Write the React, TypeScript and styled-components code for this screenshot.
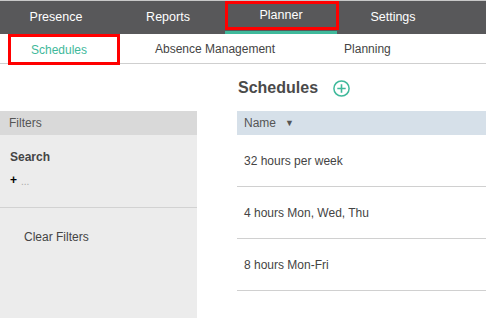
import styled, { createGlobalStyle } from 'styled-components';

const GlobalStyle = createGlobalStyle`
  html, body {
    margin: 0;
    padding: 0;
    background: #fff;
    font-family: "Liberation Sans", Arial, sans-serif;
    font-size: 12px;
    color: #444;
  }
`;

const mainTabs = ['Presence', 'Reports', 'Planner', 'Settings'];
const rows = ['32 hours per week', '4 hours Mon, Wed, Thu', '8 hours Mon-Fri'];

const PlusCircle = () => (
  <svg width="17" height="17" viewBox="0 0 17 17" fill="none">
    <circle cx="8.5" cy="8.5" r="7.6" stroke="#3fb99b" strokeWidth="1.5" />
    <path d="M8.5 4.3v8.4M4.3 8.5h8.4" stroke="#3fb99b" strokeWidth="1.6" />
  </svg>
);

const App = () => {
  return (
    <>
      <GlobalStyle />
      <TopNav>
        {mainTabs.map((tab) => (
          <TopItem key={tab} $active={tab === 'Planner'}>
            {tab}
          </TopItem>
        ))}
      </TopNav>
      <SubNav>
        <SubItem $active>Schedules</SubItem>
        <SubItem>Absence Management</SubItem>
        <SubItem>Planning</SubItem>
      </SubNav>
      <Body>
        <Sidebar>
          <FiltersHead>Filters</FiltersHead>
          <SearchBlock>
            <SearchTitle>Search</SearchTitle>
            <AddRow>
              <Plus>+</Plus>
              <Dots>...</Dots>
            </AddRow>
          </SearchBlock>
          <ClearButton type="button">Clear Filters</ClearButton>
        </Sidebar>
        <Main>
          <TitleRow>
            <Title>Schedules</Title>
            <AddButton type="button">
              <PlusCircle />
            </AddButton>
          </TitleRow>
          <TableHead>
            Name <Caret>▼</Caret>
          </TableHead>
          {rows.map((row) => (
            <Row key={row}>{row}</Row>
          ))}
        </Main>
      </Body>
    </>
  );
};

export default App;

const TopNav = styled.nav`
  display: flex;
  height: 34px;
  box-sizing: border-box;
  border-top: 1px solid #c8c8c8;
  background: #58585a;
`;

const TopItem = styled.div<{ $active?: boolean }>`
  position: relative;
  width: 112px;
  display: flex;
  align-items: center;
  justify-content: center;
  padding-bottom: 2px;
  box-sizing: border-box;
  color: #fff;
  font-size: 12.5px;
  ${({ $active }) =>
    $active &&
    `
    margin-left: 1px;
    border-bottom: 3px solid #3fb99b;
    &::after {
      content: '';
      position: absolute;
      left: 0;
      right: -2px;
      top: 0;
      height: 29px;
      box-sizing: border-box;
      border: 3px solid #f00;
    }
  `}
`;

const SubNav = styled.div`
  display: flex;
  align-items: center;
  height: 29px;
  padding-left: 8px;
  border-bottom: 1px solid #cfcfcf;
  gap: 69px;
`;

const SubItem = styled.div<{ $active?: boolean }>`
  color: ${({ $active }) => ($active ? '#3fb99b' : '#444')};
  font-size: 12px;
  ${({ $active }) =>
    $active &&
    `
    width: 112px;
    height: 31px;
    margin-top: 2px;
    margin-right: -34px;
    box-sizing: border-box;
    border: 3px solid #f00;
    padding-left: 20px;
    display: flex;
    align-items: center;
  `}
`;

const Body = styled.div`
  display: flex;
  gap: 40px;
  min-height: 254px;
`;

const Sidebar = styled.aside`
  width: 197px;
  margin-top: 47px;
  background: #ececec;
`;

const FiltersHead = styled.div`
  height: 24px;
  line-height: 24px;
  padding-left: 9px;
  background: #d9d9d9;
  color: #555;
`;

const SearchBlock = styled.div`
  padding: 15px 10px 0;
  height: 57px;
  border-bottom: 1px solid #d2d2d2;
`;

const SearchTitle = styled.div`
  font-weight: bold;
  color: #444;
  font-size: 12px;
`;

const AddRow = styled.div`
  display: flex;
  align-items: center;
  gap: 4px;
  margin-top: 9px;
`;

const Plus = styled.span`
  color: #000;
  font-size: 12px;
  font-weight: bold;
`;

const Dots = styled.span`
  color: #aaa;
  font-size: 10px;
  margin-top: 3px;
`;

const ClearButton = styled.button`
  display: block;
  margin: 22px 0 0 24px;
  padding: 0;
  border: 0;
  background: none;
  font-family: inherit;
  font-size: 12px;
  color: #444;
`;

const Main = styled.main`
  flex: 1;
  padding-top: 14px;
`;

const TitleRow = styled.div`
  display: flex;
  align-items: center;
  gap: 15px;
  height: 20px;
  margin-bottom: 13px;
`;

const Title = styled.h1`
  margin: 0 0 0 1px;
  font-size: 16px;
  font-weight: bold;
  color: #4a4a4a;
`;

const AddButton = styled.button`
  display: flex;
  padding: 0;
  border: 0;
  background: none;
`;

const TableHead = styled.div`
  height: 24px;
  display: flex;
  align-items: center;
  padding-left: 7px;
  background: #d6e0e9;
  color: #555;
`;

const Caret = styled.span`
  font-size: 9px;
  margin-left: 9px;
  color: #555;
`;

const Row = styled.div`
  height: 51px;
  display: flex;
  align-items: center;
  padding-left: 7px;
  border-bottom: 1px solid #d0d0d0;
  color: #444;
`;
